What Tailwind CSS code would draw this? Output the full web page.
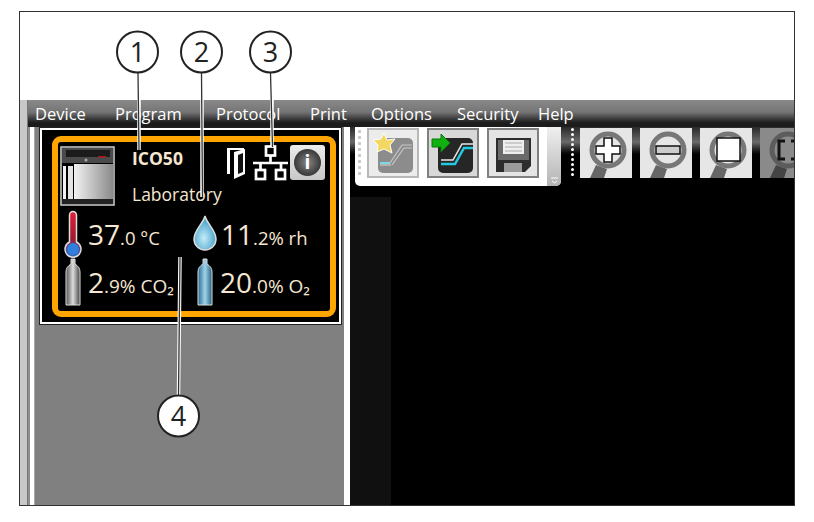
<!DOCTYPE html>
<html lang="en">
<head>
  <title>Incubator Device Panel</title>
  <script src="https://cdn.jsdelivr.net/npm/@tailwindcss/browser@4"></script>
</head>
<body class="bg-white font-['Open_Sans',sans-serif] overflow-hidden">
<div class="relative w-[814px] h-[522px]">
  <div class="absolute left-[19px] top-[11px] w-[776px] h-[495px] border border-[#333] bg-white flex flex-col overflow-hidden">
    <div class="h-[88px] shrink-0"></div>

    <div class="flex-1 flex min-h-0">
      <!-- left strip -->
      <div class="w-[7px] bg-[#c8c8c8] shrink-0"></div>
      <div class="w-px bg-[#777] shrink-0"></div>

      <div class="flex-1 min-w-0 flex flex-col">
        <!-- menu -->
        <div class="h-[27px] shrink-0 flex items-start pl-[7px] text-[16.5px] leading-[27px] text-white bg-linear-to-b from-[#8a8a8a] via-[#747474] via-45% to-[#1c1c1c] to-85%">
          <span class="w-[80px]">Device</span>
          <span class="w-[101px]">Program</span>
          <span class="w-[94px]">Protocol</span>
          <span class="w-[61px]">Print</span>
          <span class="w-[86px]">Options</span>
          <span class="w-[81px]">Security</span>
          <span>Help</span>
        </div>

        <div class="flex-1 flex min-h-0">
          <div class="w-[2px] bg-[#8e8e8e] shrink-0"></div>
          <div class="w-[5px] bg-white border-r border-[#a8a8b0] shrink-0"></div>

          <!-- sidebar -->
          <div class="w-[309px] bg-[#808080] shrink-0 pt-px pl-[5px]">
            <div class="w-[301px] h-[196px] bg-black border-2 border-white outline outline-[#222] pl-[10px] pt-[6px]">
              <div class="w-[284px] h-[181px] border-[6px] border-[#ffa500] rounded-[9px] bg-black pt-[4px] text-[#f6e7d2]">
                <div class="flex h-[64px] pl-[2px]">
                  <svg width="56" height="60" viewBox="0 0 56 60" class="shrink-0">
                    <defs>
                      <linearGradient id="body" x1="0" x2="1" y1="0" y2="0"><stop offset="0" stop-color="#f2f2f2"/><stop offset="1" stop-color="#8a8a8a"/></linearGradient>
                    </defs>
                    <rect x="1" y="1" width="53" height="58" fill="#000" stroke="#cfcfcf" stroke-width="1.500"/>
                    <rect x="2" y="2" width="51" height="15" fill="#4a4a4a"/>
                    <rect x="6" y="4" width="44" height="7" fill="#1b1b1b"/>
                    <rect x="38" y="10" width="8" height="1.500" fill="#b01818"/>
                    <circle cx="26" cy="14" r="1.500" fill="#aaa"/>
                    <rect x="14" y="18" width="39" height="35" fill="url(#body)"/>
                    <rect x="3" y="20" width="3" height="36" fill="#f0f0f0"/>
                    <rect x="8" y="20" width="5" height="36" fill="#e4e4e4"/>
                    <rect x="2" y="53" width="51" height="5" fill="#222"/>
                  </svg>
                  <div class="ml-[16px] w-[92px]">
                    <div class="text-[17.5px] font-bold leading-[20px] mt-[2px]">ICO50</div>
                    <div class="text-[17.5px] leading-[20px] mt-[16px] whitespace-nowrap">Laboratory</div>
                  </div>
                  <svg width="20" height="32" viewBox="0 0 20 32" class="ml-[2px] mt-[1px] shrink-0">
                    <path d="M1 1H18V3H4V27H1Z" fill="#fff"/>
                    <path d="M8 5L19 2V27L8 32Z" fill="#fff"/>
                    <path d="M12 8L17 6V25L12 27Z" fill="#111"/>
                  </svg>
                  <svg width="36" height="36" viewBox="0 0 36 36" class="ml-[7px] shrink-0 -mt-[1px]">
                    <g fill="none" stroke="#fff" stroke-width="2.700">
                      <rect x="13" y="1.500" width="9" height="9"/>
                      <path d="M17.500 10V18M0 18H35M7.500 18V25M28 18V25"/>
                      <rect x="3" y="25" width="9" height="9"/>
                      <rect x="23" y="25" width="9" height="9"/>
                    </g>
                  </svg>
                  <div class="ml-[1px] w-[35px] h-[35px] -mt-[1px] rounded-[3px] bg-linear-to-b from-[#ececec] to-[#c8c8c8] flex items-center justify-center shrink-0">
                    <div class="w-[27px] h-[27px] rounded-full bg-radial from-[#888] to-[#1c1c1c] text-white text-[19px] font-bold leading-[27px] text-center">i</div>
                  </div>
                </div>

                <div class="flex h-[48px] items-start">
                  <svg width="18" height="48" viewBox="0 0 18 48" class="shrink-0 ml-[6px]">
                    <defs>
                      <linearGradient id="therm" x1="0" x2="0" y1="0" y2="1"><stop offset="0" stop-color="#e0203a"/><stop offset="0.6" stop-color="#a01830"/><stop offset="1" stop-color="#2a6fd0"/></linearGradient>
                    </defs>
                    <path d="M5.500 5a3.500 3.500 0 0 1 7 0V32a8 8 0 1 1-7 0Z" fill="url(#therm)" stroke="#ddd" stroke-width="1.500"/>
                    <circle cx="9" cy="39" r="6" fill="#2f7fdc"/>
                  </svg>
                  <div class="ml-[6px] w-[105px] mt-[2px] flex items-baseline">
                    <span class="text-[28px] leading-[44px]">37</span><span class="text-[18.5px]">.0 °C</span>
                  </div>
                  <svg width="24" height="36" viewBox="0 0 24 36" class="shrink-0 mt-[5px]">
                    <defs>
                      <radialGradient id="drop" cx="0.45" cy="0.65" r="0.6"><stop offset="0" stop-color="#c4ecf8"/><stop offset="1" stop-color="#3e9cc8"/></radialGradient>
                    </defs>
                    <path d="M12 1C14 9 23 15 23 24A11 11 0 0 1 1 24C1 15 10 9 12 1Z" fill="url(#drop)" stroke="#ddd" stroke-width="1.500"/>
                  </svg>
                  <div class="ml-[4px] mt-[2px] flex items-baseline">
                    <span class="text-[28px] leading-[44px]">11</span><span class="text-[18.5px]">.2% rh</span>
                  </div>
                </div>

                <div class="flex h-[48px] items-start">
                  <svg width="16" height="48" viewBox="0 0 16 48" class="shrink-0 ml-[7px]">
                    <defs>
                      <linearGradient id="grey" x1="0" x2="1" y1="0" y2="0"><stop offset="0" stop-color="#555"/><stop offset="0.5" stop-color="#ddd"/><stop offset="1" stop-color="#444"/></linearGradient>
                      <linearGradient id="blue" x1="0" x2="1" y1="0" y2="0"><stop offset="0" stop-color="#2a6a90"/><stop offset="0.5" stop-color="#a0d4ec"/><stop offset="1" stop-color="#25607f"/></linearGradient>
                    </defs>
                    <path d="M6 1H10V6C13 8 15 10 15 14V47H1V14C1 10 3 8 6 6Z" fill="url(#grey)" stroke="#ddd"/>
                  </svg>
                  <div class="ml-[7px] w-[109px] mt-[2px] flex items-baseline">
                    <span class="text-[28px] leading-[44px]">2</span><span class="text-[19px]">.9% CO₂</span>
                  </div>
                  <svg width="16" height="48" viewBox="0 0 16 48" class="shrink-0">
                    <path d="M6 1H10V6C13 8 15 10 15 14V47H1V14C1 10 3 8 6 6Z" fill="url(#blue)" stroke="#ddd"/>
                  </svg>
                  <div class="ml-[7px] mt-[2px] flex items-baseline">
                    <span class="text-[28px] leading-[44px]">20</span><span class="text-[19px]">.0% O₂</span>
                  </div>
                </div>
              </div>
            </div>
          </div>
          <div class="w-[6px] bg-white shrink-0"></div>

          <!-- main -->
          <div class="flex-1 min-w-0 bg-black relative overflow-hidden">
            <div class="h-[30px] bg-linear-to-b from-[#2a2a2a] via-[#6a6a6a] to-black"></div>
            <div class="absolute left-0 top-[70px] bottom-0 w-[41px] bg-[#101010]"></div>

            <div class="absolute left-0 top-0 flex items-start">
              <!-- toolbar panel -->
              <div class="ml-[5px] w-[206px] h-[59px] shrink-0 bg-white rounded-b-[5px] flex overflow-hidden">
                <div class="w-[12px] pt-[3px] pl-[3px] flex flex-col gap-[3px] shrink-0">
                  <i class="w-[3px] h-[3px] bg-[#ccc]"></i><i class="w-[3px] h-[3px] bg-[#ccc]"></i><i class="w-[3px] h-[3px] bg-[#ccc]"></i><i class="w-[3px] h-[3px] bg-[#ccc]"></i><i class="w-[3px] h-[3px] bg-[#ccc]"></i><i class="w-[3px] h-[3px] bg-[#ccc]"></i><i class="w-[3px] h-[3px] bg-[#ccc]"></i><i class="w-[3px] h-[3px] bg-[#ccc]"></i>
                </div>
                <div class="flex gap-[8px] pt-px shrink-0">
                  <div class="w-[52px] h-[50px] bg-[#ececec] border-2 border-[#b8b8b8]">
                    <svg width="48" height="46" viewBox="0 0 48 46">
                      <rect x="9" y="8" width="35" height="35" rx="5" fill="#8c8c8c"/>
                      <path d="M21 33L33 15H43M23 35L35 18H43" fill="none" stroke="#c8c8c8" stroke-width="1.200"/>
                      <path d="M11 33H21" stroke="#7fd8e8" stroke-width="2"/>
                      <path d="M11 35H22" stroke="#d8d8d8" stroke-width="1.200"/>
                      <path d="M15 3L18 10L26 9L21 15L23 23L15 19L8 22L9 15L4 10L12 9Z" fill="#f2d860" stroke="#fff"/>
                    </svg>
                  </div>
                  <div class="w-[52px] h-[50px] bg-[#d8d8d8] border-2 border-[#808080]">
                    <svg width="48" height="46" viewBox="0 0 48 46">
                      <rect x="9" y="8" width="35" height="35" rx="5" fill="#262626"/>
                      <path d="M12 30H24L33 14H44" fill="none" stroke="#e8e8e8" stroke-width="1.500"/>
                      <path d="M12 34H26L35 18H44" fill="none" stroke="#22c8e0" stroke-width="2.500"/>
                      <path d="M3 9H12V4L21 13L12 22V17H3Z" fill="#10b010" stroke="#0a7a0a"/>
                    </svg>
                  </div>
                  <div class="w-[52px] h-[50px] bg-[#e4e4e4] border-2 border-[#808080]">
                    <svg width="48" height="46" viewBox="0 0 48 46">
                      <path d="M7 8H42V36L36 42H7Z" fill="#2c2c2c"/>
                      <path d="M9 10H40V30H9Z" fill="#6a6a6a"/>
                      <rect x="14" y="10" width="21" height="14" fill="#eee"/>
                      <path d="M16 13H33M16 17H33M16 21H33" stroke="#aaa"/>
                      <rect x="15" y="33" width="18" height="9" fill="#9a9a9a"/>
                    </svg>
                  </div>
                </div>
                <div class="ml-auto w-[14px] bg-linear-to-b from-[#f0f0f0] to-[#b4b4b4] flex flex-col justify-end items-center pb-[2px] shrink-0">
                  <svg width="7" height="7" viewBox="0 0 7 7"><path d="M0 1H7M1 4L3.500 6L6 4" stroke="#fff" fill="none"/></svg>
                </div>
              </div>

              <!-- zoom buttons -->
              <div class="ml-[10px] mt-px w-[3px] flex flex-col gap-[2px] shrink-0">
                <i class="w-[3px] h-[3px] rounded-full bg-white"></i><i class="w-[3px] h-[3px] rounded-full bg-white"></i><i class="w-[3px] h-[3px] rounded-full bg-white"></i><i class="w-[3px] h-[3px] rounded-full bg-white"></i><i class="w-[3px] h-[3px] rounded-full bg-white"></i><i class="w-[3px] h-[3px] rounded-full bg-white"></i><i class="w-[3px] h-[3px] rounded-full bg-white"></i><i class="w-[3px] h-[3px] rounded-full bg-white"></i><i class="w-[3px] h-[3px] rounded-full bg-white"></i><i class="w-[3px] h-[3px] rounded-full bg-white"></i>
              </div>
              <div class="ml-[6px] mt-px flex gap-[8px] shrink-0">
                <svg width="52" height="50" viewBox="0 0 52 50" class="shrink-0">
                  <rect width="52" height="50" fill="#e6e6e6"/>
                  <path d="M10 50L16 37L27 41L24 50Z" fill="#666"/>
                  <circle cx="28" cy="22" r="16" fill="#e6e6e6" stroke="#777" stroke-width="5"/>
                  <path d="M24 10H32V18H40V26H32V34H24V26H16V18H24Z" fill="#fff" stroke="#111" stroke-width="1.500"/>
                </svg>
                <svg width="52" height="50" viewBox="0 0 52 50" class="shrink-0">
                  <rect width="52" height="50" fill="#e6e6e6"/>
                  <path d="M10 50L16 37L27 41L24 50Z" fill="#666"/>
                  <circle cx="28" cy="22" r="16" fill="#e6e6e6" stroke="#777" stroke-width="5"/>
                  <rect x="16" y="18" width="24" height="8" fill="#ccc" stroke="#111" stroke-width="1.500"/>
                </svg>
                <svg width="52" height="50" viewBox="0 0 52 50" class="shrink-0">
                  <rect width="52" height="50" fill="#e6e6e6"/>
                  <path d="M10 50L16 37L27 41L24 50Z" fill="#666"/>
                  <circle cx="28" cy="22" r="16" fill="#e6e6e6" stroke="#777" stroke-width="5"/>
                  <rect x="17" y="10" width="23" height="23" fill="#fff" stroke="#111" stroke-width="1.500"/>
                </svg>
                <svg width="52" height="50" viewBox="0 0 52 50" class="shrink-0">
                  <rect width="52" height="50" fill="#8a8a8a"/>
                  <path d="M10 50L16 37L27 41L24 50Z" fill="#444"/>
                  <circle cx="28" cy="22" r="16" fill="#8a8a8a" stroke="#5c5c5c" stroke-width="5"/>
                  <path d="M25 13H19V31H25M31 13H37V31H31" fill="none" stroke="#111" stroke-width="3"/>
                </svg>
              </div>
            </div>
          </div>
        </div>
      </div>
    </div>
  </div>

  <!-- callouts -->
  <svg width="814" height="522" viewBox="0 0 814 522" class="absolute left-0 top-0 pointer-events-none">
    <g fill="none" stroke-linecap="butt">
      <path d="M139 100V150M202 100V197M272 100V147M180 257L178.500 395" stroke="#fff" stroke-width="3.500"/>
      <path d="M138 73L139 150M201.500 73L202.500 197M270.500 73L272.500 147M180 257L178.500 395" stroke="#333" stroke-width="1.300"/>
    </g>
    <g fill="#fff" stroke="#222" stroke-width="2">
      <circle cx="137.500" cy="52" r="20.500"/>
      <circle cx="201.500" cy="52" r="20.500"/>
      <circle cx="270.500" cy="52" r="20.500"/>
      <circle cx="178.500" cy="416" r="20.500"/>
    </g>
    <g fill="#222" stroke="none" font-family="Open Sans" font-size="27" text-anchor="middle">
      <text x="137.500" y="62">1</text>
      <text x="201.500" y="62">2</text>
      <text x="270.500" y="62">3</text>
      <text x="178.500" y="426">4</text>
    </g>
  </svg>
</div>
</body>
</html>
